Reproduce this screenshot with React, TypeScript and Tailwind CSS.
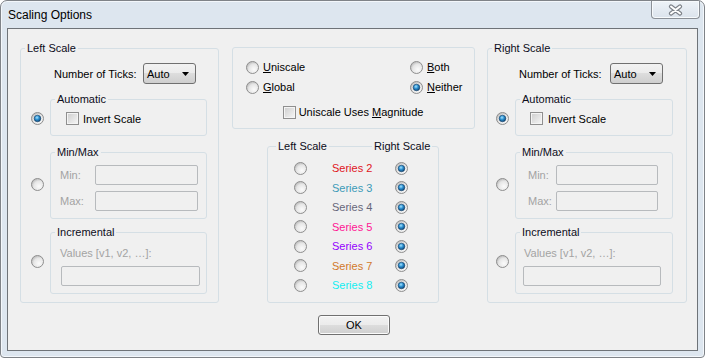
import { useId } from "react";
import type { ReactNode } from "react";

function Radio({ checked = false }: { checked?: boolean }) {
  const id = useId().replace(/:/g, "");
  return (
    <svg width="13" height="13" viewBox="0 0 13 13" className="block shrink-0">
      <defs>
        <radialGradient id={`r${id}`} cx="62%" cy="66%" r="62%">
          <stop offset="0" stopColor="#fbfbfb" />
          <stop offset="0.7" stopColor="#e6e6e6" />
          <stop offset="1" stopColor="#c4c4c4" />
        </radialGradient>
        <radialGradient id={`d${id}`} cx="42%" cy="36%" r="70%">
          <stop offset="0" stopColor="#a6e4ff" />
          <stop offset="0.45" stopColor="#2b8fd0" />
          <stop offset="1" stopColor="#0a3a66" />
        </radialGradient>
      </defs>
      <circle cx="6.5" cy="6.5" r="6" fill={`url(#r${id})`} stroke="#8e8e8e" />
      {checked && (
        <circle cx="6.5" cy="6.5" r="3.3" fill={`url(#d${id})`} stroke="#12406a" strokeWidth="0.6" />
      )}
    </svg>
  );
}

function Check() {
  return (
    <span className="block h-[13px] w-[13px] shrink-0 border border-[#8f8f8f] bg-gradient-to-br from-[#cdcdcd] to-[#f7f7f7] shadow-[inset_0_0_0_1px_#f4f4f4]" />
  );
}

function Combo() {
  return (
    <div className="flex h-[21px] w-[53px] items-center justify-between rounded-[3px] border border-[#707070] bg-[linear-gradient(#f2f2f2_0%,#ebebeb_50%,#dddddd_50%,#cfcfcf_100%)] pl-[3px] pr-[6px] pt-[2px] text-[11px] text-black">
      <span>Auto</span>
      <svg width="7" height="4" viewBox="0 0 7 4" className="mb-[2px]">
        <path d="M0 0h7L3.5 4z" fill="#000" />
      </svg>
    </div>
  );
}

function Field({ className }: { className: string }) {
  return <div className={`h-[20px] rounded-[2px] border border-[#b7babd] bg-[#f0f0f0] ${className}`} />;
}

function Group({
  label,
  className,
  children,
}: {
  label?: ReactNode;
  className: string;
  children?: ReactNode;
}) {
  return (
    <div className={`relative shrink-0 rounded-[3px] border border-[#d5dfe5] ${className}`}>
      {label}
      {children}
    </div>
  );
}

function Legend({ text, className = "left-[4px]" }: { text: string; className?: string }) {
  return (
    <span className={`absolute top-[-8px] bg-[#f0f0f0] px-[2px] text-[11px] leading-[14px] text-[#0c0c1a] ${className}`}>
      {text}
    </span>
  );
}

function ScalePanel({ side }: { side: "left" | "right" }) {
  const L = side === "left";
  return (
    <Group
      label={<Legend text={L ? "Left Scale" : "Right Scale"} />}
      className={L ? "mt-[1px] h-[255px] w-[199px]" : "mt-[1px] h-[255px] w-[200px]"}
    >
      <div className={L ? "flex items-center pl-[33px] pt-[14px]" : "flex items-center pl-[31px] pt-[14px]"}>
        <span className={L ? "w-[89px] pt-[1px]" : "w-[91px] pt-[1px]"}>Number of Ticks:</span>
        <Combo />
      </div>

      <div className={L ? "mt-[15px] flex flex-col pl-[10px]" : "mt-[15px] flex flex-col pl-[8px]"}>
        <div className="flex items-start gap-[6px]">
          <div className="mt-[13px]">
            <Radio checked />
          </div>
          <Group label={<Legend text="Automatic" />} className={L ? "h-[37px] w-[157px]" : "h-[37px] w-[158px]"}>
            <div className={L ? "mt-[12px] flex h-[13px] items-center gap-[4px] pl-[15px]" : "mt-[12px] flex h-[13px] items-center gap-[5px] pl-[14px]"}>
              <Check />
              <span className="pt-[1px]">Invert Scale</span>
            </div>
          </Group>
        </div>

        <div className="mt-[16px] flex items-start gap-[6px]">
          <div className="mt-[26px]">
            <Radio />
          </div>
          <Group label={<Legend text="Min/Max" />} className={L ? "h-[67px] w-[157px]" : "h-[67px] w-[158px]"}>
            <div className={L ? "flex flex-col gap-[6px] pl-[9px] pt-[12px]" : "flex flex-col gap-[6px] pl-[12px] pt-[12px]"}>
              <div className="flex items-center">
                <span className={L ? "w-[35px] text-[#a3a3a3]" : "w-[28px] text-[#a3a3a3]"}>Min:</span>
                <Field className={L ? "w-[103px]" : "w-[102px]"} />
              </div>
              <div className="flex items-center">
                <span className={L ? "w-[35px] text-[#a3a3a3]" : "w-[28px] text-[#a3a3a3]"}>Max:</span>
                <Field className={L ? "w-[103px]" : "w-[102px]"} />
              </div>
            </div>
          </Group>
        </div>

        <div className="mt-[13px] flex items-start gap-[6px]">
          <div className="mt-[23px]">
            <Radio />
          </div>
          <Group label={<Legend text="Incremental" />} className={L ? "h-[62px] w-[157px]" : "h-[62px] w-[158px]"}>
            <div className={L ? "pl-[9px] pt-[13px] leading-[14px] text-[#a3a3a3]" : "pl-[8px] pt-[13px] leading-[14px] text-[#a3a3a3]"}>
              Values [v1, v2, …]:
            </div>
            <div className={L ? "mt-[6px] pl-[10px]" : "mt-[6px] pl-[7px]"}>
              <Field className={L ? "w-[139px]" : "w-[138px]"} />
            </div>
          </Group>
        </div>
      </div>
    </Group>
  );
}

const series = [
  { name: "Series 2", color: "text-[#e0141c]" },
  { name: "Series 3", color: "text-[#3c9bb8]" },
  { name: "Series 4", color: "text-[#66667a]" },
  { name: "Series 5", color: "text-[#ff1493]" },
  { name: "Series 6", color: "text-[#9400ff]" },
  { name: "Series 7", color: "text-[#d2782a]" },
  { name: "Series 8", color: "text-[#12eef0]" },
];

function CenterPanel() {
  return (
    <div className="ml-[13px] flex w-[243px] shrink-0 flex-col">
      <Group className="h-[82px] w-[243px]">
        <div className="flex pl-[13px] pt-[9px]">
          <div className="flex w-[164px] flex-col">
            <div className="flex h-[20px] items-center gap-[4px]">
              <Radio />
              <span className="pt-[1px]">
                <u>U</u>niscale
              </span>
            </div>
            <div className="flex h-[20px] items-center gap-[4px]">
              <Radio />
              <span className="pt-[1px]">
                <u>G</u>lobal
              </span>
            </div>
          </div>
          <div className="flex flex-col">
            <div className="flex h-[20px] items-center gap-[4px]">
              <Radio />
              <span className="pt-[1px]">
                <u>B</u>oth
              </span>
            </div>
            <div className="flex h-[20px] items-center gap-[4px]">
              <Radio checked />
              <span className="pt-[1px]">
                <u>N</u>either
              </span>
            </div>
          </div>
        </div>
        <div className="mt-[5px] flex h-[20px] items-center justify-center gap-[3px] pr-[1px]">
          <Check />
          <span className="pt-[1px]">
            Uniscale Uses <u>M</u>agnitude
          </span>
        </div>
      </Group>

      <Group
        label={
          <>
            <Legend text="Left Scale" className="left-[8px]" />
            <Legend text="Right Scale" className="left-[104px]" />
          </>
        }
        className="ml-[35px] mt-[17px] h-[157px] w-[172px]"
      >
        <div className="flex flex-col pl-[26px] pt-[11px]">
          {series.map((s, i) => (
            <div key={s.name} className={i % 2 === 0 ? "flex h-[20px] items-center" : "flex h-[19px] items-center"}>
              <Radio />
              <span className={`ml-[25px] w-[63px] pt-[1px] ${s.color}`}>{s.name}</span>
              <Radio checked />
            </div>
          ))}
        </div>
      </Group>
    </div>
  );
}

function CloseGlyph() {
  return (
    <svg width="15" height="12" viewBox="0 0 15 12">
      <path d="M3 2.5L12 9.5M12 2.5L3 9.5" stroke="#7d8289" strokeWidth="4.2" strokeLinecap="round" />
      <path d="M3 2.5L12 9.5M12 2.5L3 9.5" stroke="#ffffff" strokeWidth="2" strokeLinecap="round" />
    </svg>
  );
}

export default function App() {
  return (
    <div className="flex h-[358px] w-[705px] flex-col rounded-b-[4px] rounded-t-[7px] border border-[#7f8388] bg-[#dde6ef] font-['Liberation_Sans',Arial,sans-serif] text-[11px] text-black shadow-[inset_0_0_0_1px_#f3f7fb]">
      <div className="flex h-[27px] shrink-0 items-start justify-between pl-[7px] pr-[4px]">
        <span className="pt-[6px] text-[12px] leading-[16px] text-black">Scaling Options</span>
        <div className="flex h-[18px] w-[49px] items-center justify-center rounded-b-[4px] border-x border-b border-[#8b9097] bg-[linear-gradient(#eef3f8,#dbe3ec)] pt-[1px] shadow-[inset_0_0_0_1px_#f7fafc]">
          <CloseGlyph />
        </div>
      </div>

      <div className="mx-[6px] h-[323px] shrink-0 border border-[#6e7378] bg-[#f0f0f0]">
        <div className="flex items-start pl-[12px] pt-[18px]">
          <ScalePanel side="left" />
          <CenterPanel />
          <div className="ml-[12px]">
            <ScalePanel side="right" />
          </div>
        </div>
        <div className="mt-[12px] flex justify-center pl-[3px]">
          <button className="flex h-[20px] w-[72px] items-center justify-center rounded-[3px] border border-[#707070] bg-[linear-gradient(#f2f2f2_0%,#ebebeb_50%,#dddddd_50%,#cfcfcf_100%)] pt-[1px] text-[11px] text-black shadow-[inset_0_0_0_1px_#fbfbfb]">
            OK
          </button>
        </div>
      </div>
    </div>
  );
}
